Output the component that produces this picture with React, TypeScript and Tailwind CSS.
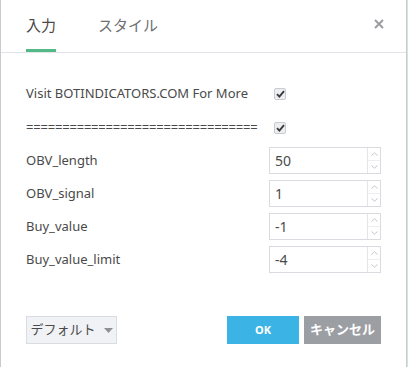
import { useState } from "react";

const FONT = "font-['Noto_Sans','Noto_Sans_CJK_JP',sans-serif]";

const NUM_FIELDS = [
  { label: "OBV_length", value: "50" },
  { label: "OBV_signal", value: "1" },
  { label: "Buy_value", value: "-1" },
  { label: "Buy_value_limit", value: "-4" },
];

function Check() {
  return (
    <span className="flex h-[12px] w-[12px] items-center justify-center rounded-[2px] border border-[#c9cbcf] bg-[#eceef1]">
      <svg width="9" height="8" viewBox="0 0 9 8">
        <path d="M1 4.2 L3.4 6.6 L8 1.2" fill="none" stroke="#3b3b3b" strokeWidth="1.9" />
      </svg>
    </span>
  );
}

function Spinner({ value }: { value: string }) {
  return (
    <div className="flex h-[27px] w-[112px] border border-[#d9dbe0] bg-white">
      <div className="flex flex-1 items-center pl-[5px] text-[14px] text-[#4a4a4a]">{value}</div>
      <div className="flex w-[13px] flex-col border-l border-[#e3e5e9]">
        <div className="flex flex-1 items-center justify-center border-b border-[#eceef1]">
          <svg width="7" height="4" viewBox="0 0 7 4">
            <path d="M0.5 3.5 L3.5 0.8 L6.5 3.5" fill="none" stroke="#c2c5cb" strokeWidth="1" />
          </svg>
        </div>
        <div className="flex flex-1 items-center justify-center">
          <svg width="7" height="4" viewBox="0 0 7 4">
            <path d="M0.5 0.5 L3.5 3.2 L6.5 0.5" fill="none" stroke="#c2c5cb" strokeWidth="1" />
          </svg>
        </div>
      </div>
    </div>
  );
}

export default function App() {
  const [tab, setTab] = useState(0);
  return (
    <div className={`flex h-[367px] w-[408px] bg-[#cfe9d6] ${FONT}`}>
      <div className="flex h-full w-[407px] flex-col border-x border-[#c9cbd0] bg-white">
        <div className="flex h-[53px] items-stretch border-b border-[#e0e3e8] pl-[25px] pr-[22px]">
          {["入力", "スタイル"].map((t, i) => (
            <button
              key={t}
              onClick={() => setTab(i)}
              className={`mr-[42px] flex items-center border-b-[3px] pt-[2px] text-[15px] ${
                tab === i ? "border-[#53b987] text-[#4a4a4a]" : "border-transparent text-[#6f6f73]"
              }`}
            >
              {t}
            </button>
          ))}
          <div className="ml-auto flex items-center pb-[4px]">
            <svg width="10" height="10" viewBox="0 0 10 10">
              <path d="M1 1 L9 9 M9 1 L1 9" stroke="#9a9ca1" strokeWidth="2" />
            </svg>
          </div>
        </div>

        <div className="flex flex-col pl-[25px] pr-[25px] pt-[29px] text-[13px] text-[#4a4a4a]">
          <div className="flex h-[24px] items-center">
            <span className="w-[248px]">Visit BOTINDICATORS.COM For More</span>
            <Check />
          </div>
          <div className="mt-[10px] flex h-[24px] items-center">
            <span className="w-[248px] tracking-[-0.2px]">================================</span>
            <Check />
          </div>
          <div className="mt-[7px] flex flex-col gap-[6px]">
            {NUM_FIELDS.map((f) => (
              <div key={f.label} className="flex items-center">
                <span className="w-[243px]">{f.label}</span>
                <Spinner value={f.value} />
              </div>
            ))}
          </div>
        </div>

        <div className="mt-auto mb-[23px] flex items-center px-[25px]">
          <button className="flex h-[28px] w-[91px] items-center justify-center gap-[8px] border border-[#dadce1] bg-[#f1f2f6] text-[13px] text-[#4a4a4a]">
            デフォルト
            <svg width="9" height="5" viewBox="0 0 9 5">
              <path d="M0 0 L9 0 L4.5 5 Z" fill="#8f9196" />
            </svg>
          </button>
          <button className="ml-auto h-[28px] w-[72px] bg-[#3bb3e4] text-[11px] font-bold text-white">OK</button>
          <button className="ml-[5px] h-[28px] w-[77px] bg-[#9b9ea3] text-[13px] font-bold text-white">キャンセル</button>
        </div>
      </div>
    </div>
  );
}
